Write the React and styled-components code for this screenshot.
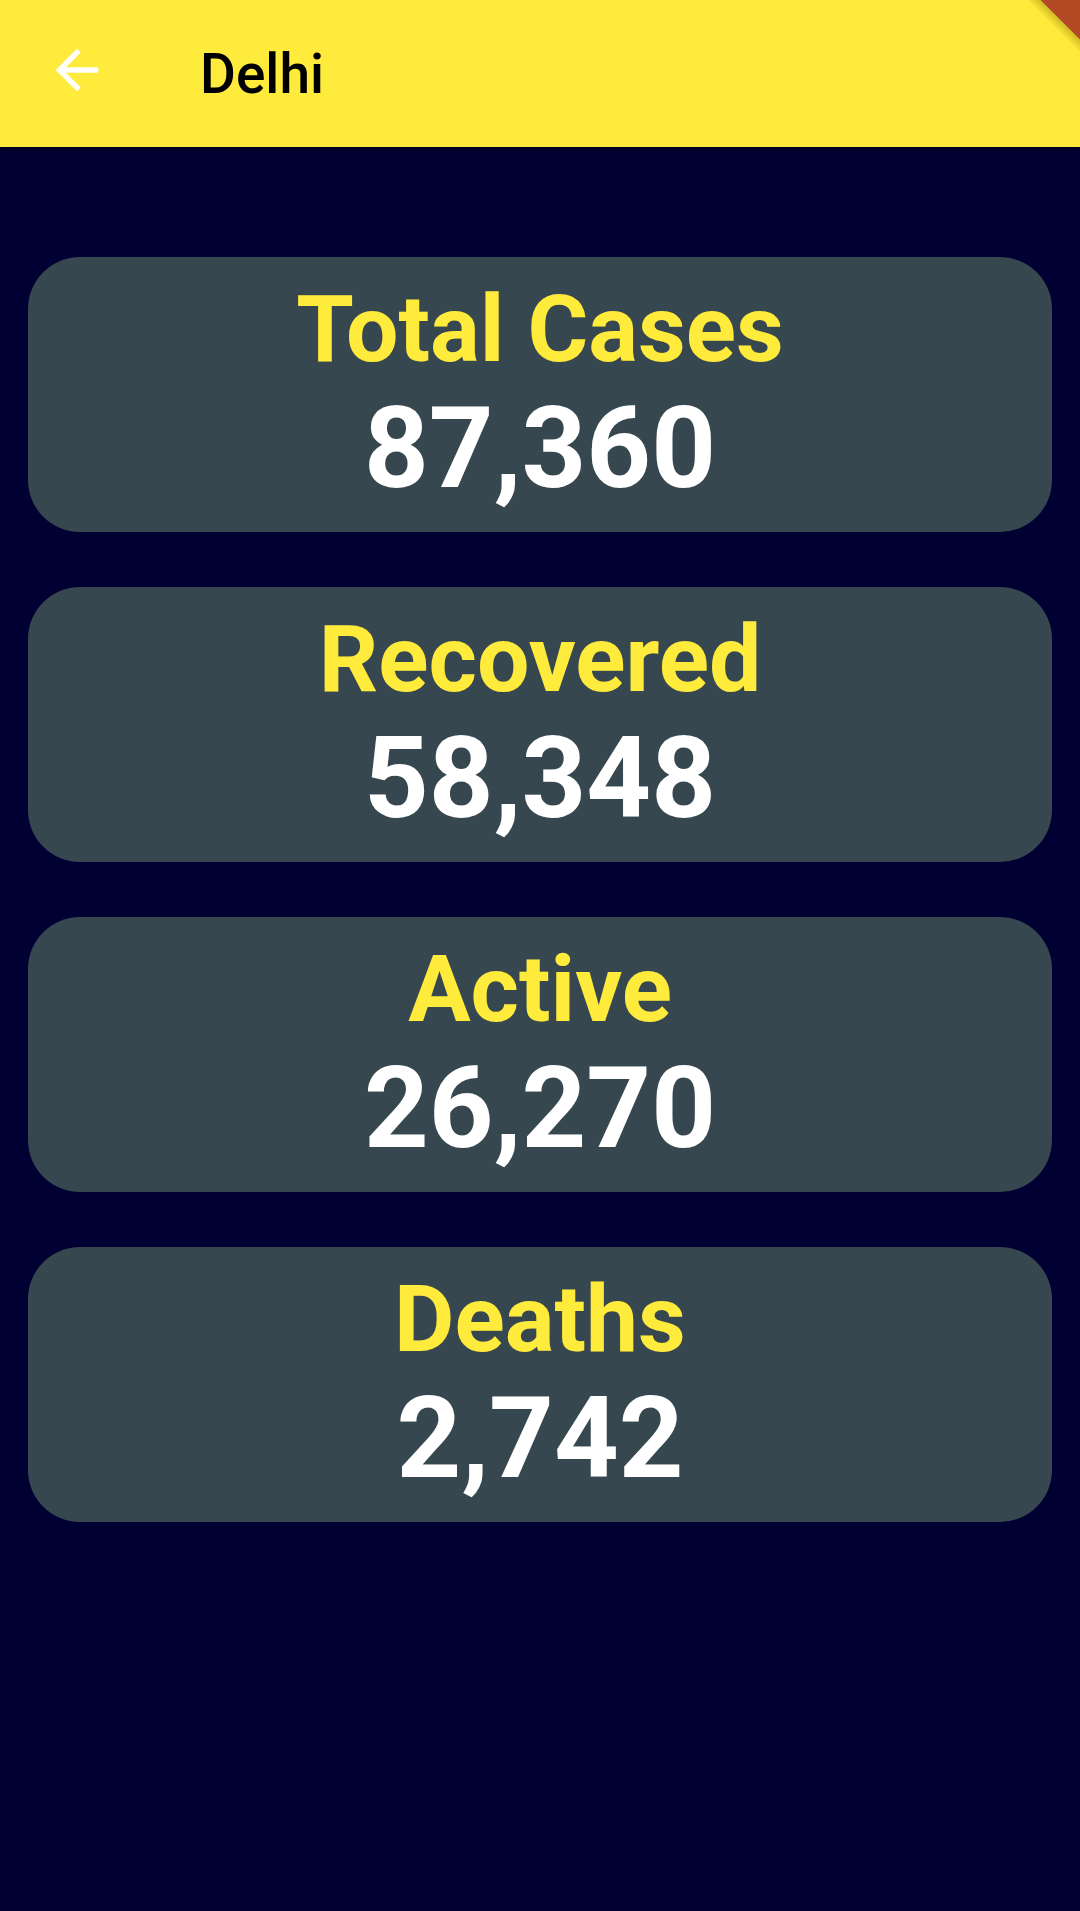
import React from "react";
import styled, { createGlobalStyle } from "styled-components";

const GlobalStyle = createGlobalStyle`
  html, body {
    margin: 0;
    padding: 0;
    background: #000033;
    overflow: hidden;
  }
  * {
    box-sizing: border-box;
  }
`;

const Page = styled.div`
  position: relative;
  width: 1080px;
  min-height: 1911px;
  background: #000033;
  font-family: Roboto, "Noto Sans", sans-serif;
`;

const AppBar = styled.header`
  position: relative;
  z-index: 1;
  height: 147px;
  display: flex;
  align-items: center;
  background: #ffeb3b;
  box-shadow: 0 2px 5px rgba(0, 0, 0, 0.35);
`;

const BackButton = styled.div`
  width: 64px;
  height: 64px;
  margin: 0 91px 7px 45px;
  display: flex;
  align-items: center;
  justify-content: center;
  color: #ffffff;
`;

const Title = styled.h1`
  margin: 0;
  font-size: 55px;
  font-weight: 500;
  line-height: 66px;
  color: #000000;
`;

const DebugBanner = styled.div`
  position: absolute;
  top: 0;
  right: 0;
  z-index: 2;
  width: 64px;
  height: 64px;
  background: linear-gradient(
    225deg,
    #b44a25 0,
    #b44a25 28px,
    rgba(120, 90, 0, 0.35) 28px,
    rgba(255, 235, 59, 0) 38px
  );
`;

const List = styled.main`
  display: flex;
  flex-direction: column;
  gap: 55px;
  padding: 110px 28px 0;
`;

const Card = styled.section`
  height: 275px;
  padding-top: 18px;
  display: flex;
  flex-direction: column;
  align-items: center;
  background: #37474f;
  border-radius: 52px;
`;

const Label = styled.div`
  font-size: 93px;
  font-weight: 700;
  line-height: 110px;
  color: #ffeb3b;
`;

const Count = styled.div`
  margin-top: -4px;
  font-size: 113px;
  font-weight: 700;
  line-height: 135px;
  color: #ffffff;
`;

const stats = [
  { label: "Total Cases", value: "87,360" },
  { label: "Recovered", value: "58,348" },
  { label: "Active", value: "26,270" },
  { label: "Deaths", value: "2,742" },
];

const ArrowBack = () => (
  <svg width="64" height="64" viewBox="0 0 24 24" fill="currentColor">
    <path d="M20 11H7.83l5.59-5.59L12 4l-8 8 8 8 1.41-1.41L7.83 13H20v-2z" />
  </svg>
);

const App = () => {
  return (
    <Page>
      <GlobalStyle />
      <AppBar>
        <BackButton>
          <ArrowBack />
        </BackButton>
        <Title>Delhi</Title>
      </AppBar>
      <DebugBanner />
      <List>
        {stats.map((item) => (
          <Card key={item.label}>
            <Label>{item.label}</Label>
            <Count>{item.value}</Count>
          </Card>
        ))}
      </List>
    </Page>
  );
};

export default App;
